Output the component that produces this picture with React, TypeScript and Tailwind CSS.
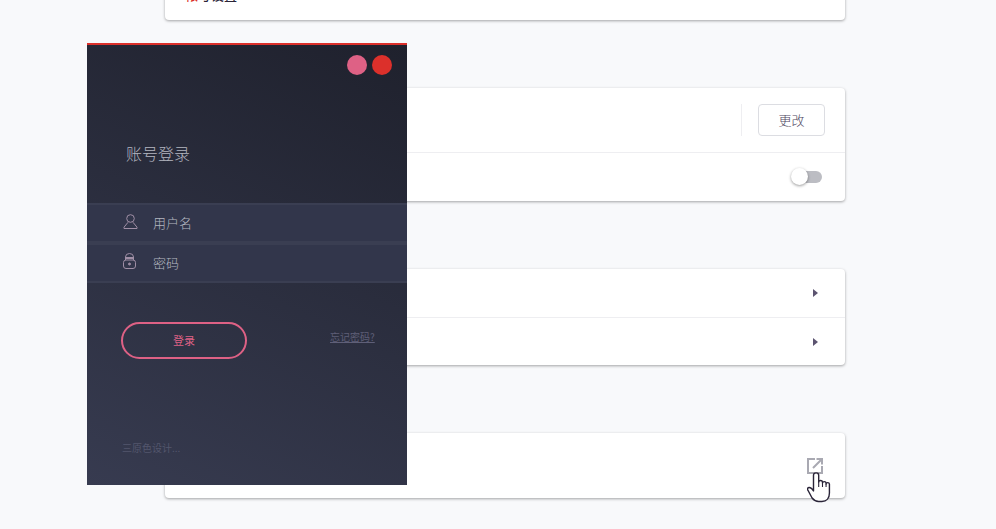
function CaretRow({ border }: { border?: boolean }) {
  return (
    <div className={border ? 'flex h-[49px] items-center justify-end border-b border-[#eeeef1] pr-[27px]' : 'flex h-[47px] items-center justify-end pr-[27px] pt-[1px]'}>
      <span className="h-0 w-0 border-y-[4.5px] border-l-[5px] border-y-transparent border-l-[#5c5470]" />
    </div>
  )
}

function Card({ className, children }: { className: string; children?: React.ReactNode }) {
  return (
    <div className={`rounded-[4px] bg-white shadow-[0_1px_3px_rgba(0,0,0,0.35)] ${className}`}>{children}</div>
  )
}

function HandCursor() {
  return (
    <svg className="absolute left-0 top-[14px] h-[31px] w-[26px]" viewBox="0 0 24 31" preserveAspectRatio="none">
      <path
        d="M6 19V3.200a2.400 2.400 0 0 1 4.800 0V10q0-1.500 1.700-1.500t1.800 1.500v1q0-1.400 1.600-1.400t1.700 1.400v1q0-1.300 1.500-1.300t1.600 1.300V21c0 5-2.500 8.500-7 8.500h-3c-3 0-4.500-1.500-6-3.500L1 18.500c-1.200-1.500-.3-3 1-3 1.500 0 2.800 1.200 4 3.500z"
        fill="#fff"
        stroke="#2a2438"
        strokeWidth="1.300"
        strokeLinejoin="round"
      />
      <path d="M10.800 10v5M14.300 11v4M17.600 12v3" fill="none" stroke="#2a2438" strokeWidth="1" />
    </svg>
  )
}

function LoginPanel() {
  return (
    <div className="absolute left-[87px] top-[43px] flex h-[442px] w-[320px] flex-col border-t-2 border-[#dc302b] bg-[linear-gradient(205deg,#1f212d,#373b50)] font-['Noto_Sans_CJK_SC',sans-serif]">
      <div className="flex justify-end gap-[5px] pr-[15px] pt-[10px]">
        <span className="size-5 rounded-full bg-[#de6185]" />
        <span className="size-5 rounded-full bg-[#dc302b]" />
      </div>
      <h1 className="mt-[66px] pl-[39px] text-[16px] leading-[24px] font-light text-[#b4b6c0]">账号登录</h1>
      <div className="mt-[38px] flex h-[38px] items-center border-t-2 border-[#3a3e52] bg-[#32364b]">
        <svg className="mb-[4px] ml-[36px] h-[15px] w-[15px]" viewBox="0 0 15 15" fill="none" stroke="#a08fa6" strokeWidth="1">
          <circle cx="7.500" cy="4.500" r="3.800" />
          <path d="M5 8.300 1 13.200v1.300h13v-1.300L10 8.300" />
        </svg>
        <span className="ml-[15px] text-[13px] font-light text-[#b4b6c0]">用户名</span>
      </div>
      <div className="flex h-[42px] items-center border-y-[4px] border-b-2 border-[#3a3e52] bg-[#32364b]">
        <svg className="mb-[4px] ml-[36px] h-[16px] w-[13px]" viewBox="0 0 13 16" fill="none" stroke="#a08fa6" strokeWidth="1">
          <path d="M2.500 7V4a4 3.500 0 0 1 8 0v3" />
          <path d="M2.500 5h8" strokeWidth="2" />
          <rect x="0.500" y="7" width="12" height="8.500" rx="2.500" />
          <circle cx="6.500" cy="11" r="1" fill="#a08fa6" />
        </svg>
        <span className="ml-[17px] text-[13px] font-light text-[#b4b6c0]">密码</span>
      </div>
      <div className="mt-[39px] flex items-center pl-[34px]">
        <button className="flex h-[37px] w-[126px] items-center justify-center rounded-full border-2 border-[#de6185] text-[11px] text-[#de6185]">
          登录
        </button>
        <a className="mb-[9px] ml-[83px] text-[10px] leading-[13px] text-[#5f5f78] underline">忘记密码?</a>
      </div>
      <p className="mt-[81px] pl-[35px] text-[10px] text-[#53566c]">三原色设计...</p>
    </div>
  )
}

export default function App() {
  return (
    <div className="relative h-[529px] w-[996px] overflow-hidden bg-[#f8f9fb]">
      <div className="ml-[165px] flex w-[680px] flex-col font-['Noto_Sans_CJK_SC',sans-serif]">
        <Card className="-mt-[20px] flex h-[40px] rounded-t-none pl-[20px] pt-[8px]">
          <span className="text-[13px] leading-[14px] font-medium text-[#2a2438]">
            <span className="text-[#dc302b]">帐</span>号设置
          </span>
        </Card>
        <Card className="mt-[68px] h-[113px]">
          <div className="flex h-[65px] items-center justify-end border-b border-[#eeeef1] pr-[20px]">
            <span className="mr-[16px] h-[32px] w-px bg-[#eeeef1]" />
            <button className="h-[32px] w-[67px] rounded-[4px] border border-[#dcdde2] text-[13px] font-light text-[#4d4660]">更改</button>
          </div>
          <div className="flex h-[48px] items-center justify-end pr-[23px]">
            <div className="relative h-[12px] w-[24px] rounded-full bg-[#bcbdc3]">
              <span className="absolute left-[-7px] top-[-3px] size-[17px] rounded-full bg-white shadow-[0_1px_3px_rgba(0,0,0,0.4)]" />
            </div>
          </div>
        </Card>
        <Card className="mt-[68px] h-[96px]">
          <CaretRow border />
          <CaretRow />
        </Card>
        <Card className="mt-[68px] h-[65px]">
          <div className="flex h-full items-start justify-end pr-[22px] pt-[25px]">
            <div className="relative size-[16px]">
              <svg className="size-[16px]" viewBox="0 0 16 16" fill="none" stroke="#a9a9b2" strokeWidth="2">
                <path d="M8 1H1v14h14V8" />
                <path d="M6 10 14.500 1.500M9.500 1h5.500v5.500" />
              </svg>
              <HandCursor />
            </div>
          </div>
        </Card>
      </div>
      <LoginPanel />
    </div>
  )
}
